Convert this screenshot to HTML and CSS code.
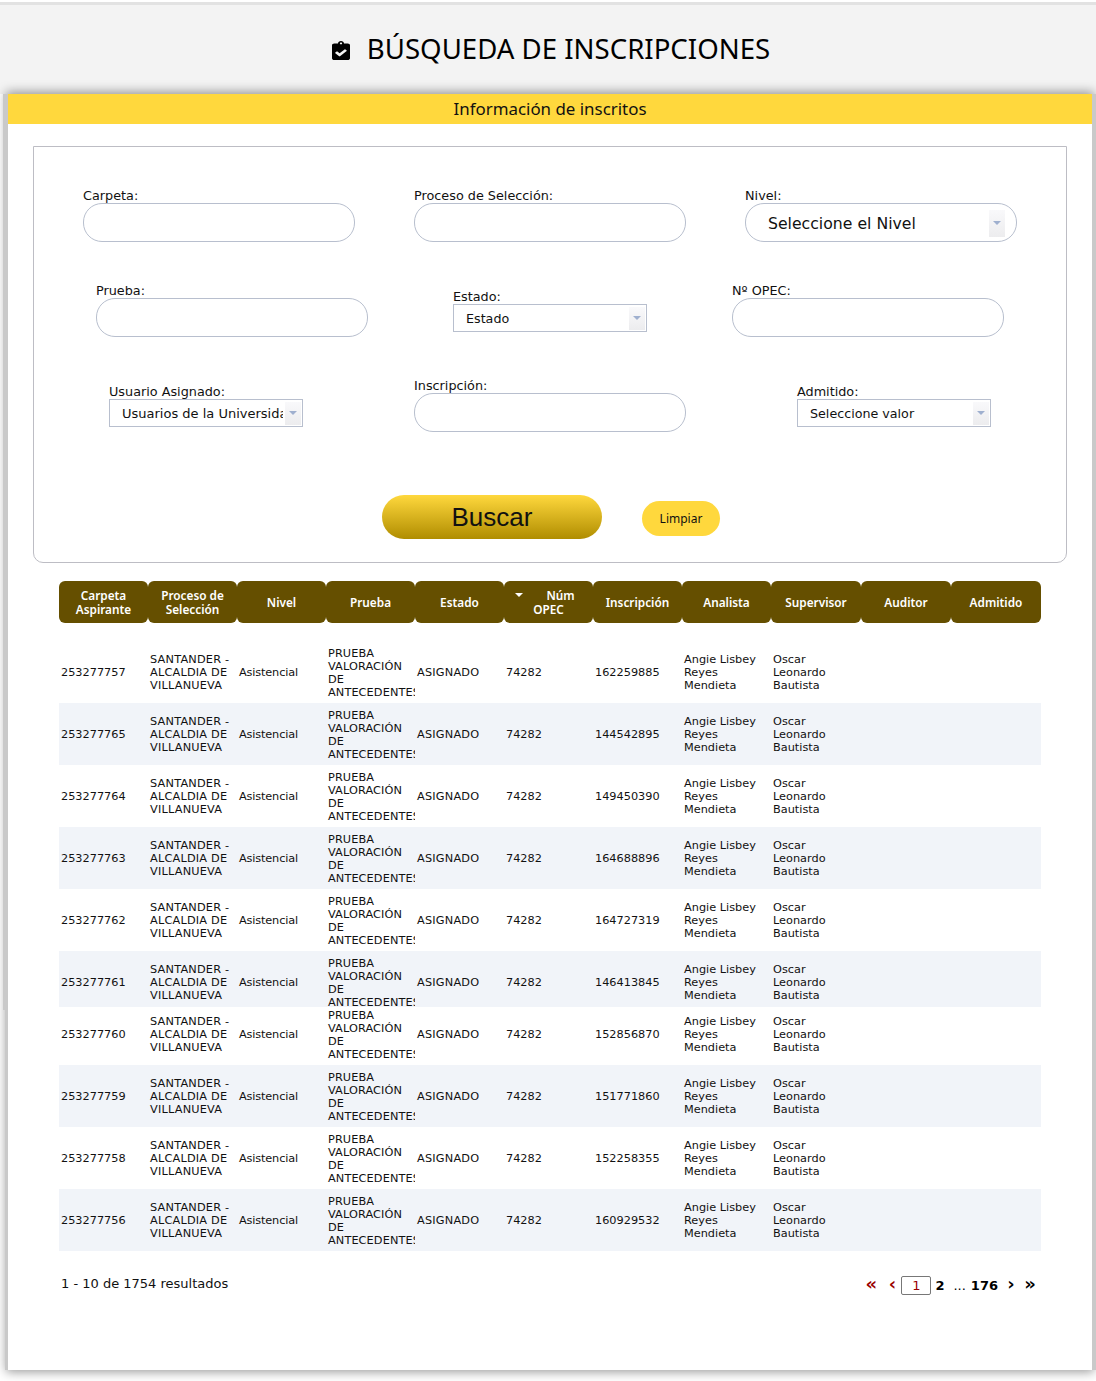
FILE: index.html
```html
<!DOCTYPE html>
<html lang="es">
<head>
<meta charset="utf-8">
<title>Búsqueda de inscripciones</title>
<link rel="stylesheet" href="styles.css">
</head>
<body>
<header class="top">
  <h1 class="title">
    <svg class="title-icon" viewBox="0 0 384 512" preserveAspectRatio="none"><path d="M336 64h-80c0-35.3-28.7-64-64-64s-64 28.7-64 64H48C21.5 64 0 85.5 0 112v352c0 26.5 21.5 48 48 48h288c26.5 0 48-21.5 48-48V112c0-26.5-21.5-48-48-48zM192 40c13.3 0 24 10.7 24 24s-10.7 24-24 24-24-10.7-24-24 10.7-24 24-24zm121.2 231.8l-143 141.8c-4.7 4.7-12.3 4.6-17-.1l-82.6-83.3c-4.7-4.7-4.6-12.3.1-17L99.1 285c4.7-4.7 12.3-4.6 17 .1l46 46.4 106-105.2c4.7-4.7 12.3-4.6 17 .1l28.2 28.4c4.7 4.8 4.6 12.3-.1 17z"/></svg>
    <span>BÚSQUEDA DE INSCRIPCIONES</span>
  </h1>
</header>
<main class="card">
  <div class="card-bar">Información de inscritos</div>
  <div class="card-body">
    <section class="filters">
      <div class="grid">
        <div class="field"><label class="lbl">Carpeta:</label><div class="input"></div></div>
        <div class="field"><label class="lbl">Proceso de Selección:</label><div class="input"></div></div>
        <div class="field"><label class="lbl">Nivel:</label>
          <div class="input round-select"><span class="rs-val">Seleccione el Nivel</span><span class="arrow"><i></i></span></div>
        </div>

        <div class="field in-13"><label class="lbl">Prueba:</label><div class="input"></div></div>
        <div class="field field-sel in-39"><label class="lbl">Estado:</label>
          <div class="select"><span class="sel-val">Estado</span><span class="arrow"><i></i></span></div>
        </div>
        <div class="field out-13"><label class="lbl">Nº OPEC:</label><div class="input"></div></div>

        <div class="field field-sel in-26"><label class="lbl">Usuario Asignado:</label>
          <div class="select"><span class="sel-val">Usuarios de la Universidad</span><span class="arrow"><i></i></span></div>
        </div>
        <div class="field"><label class="lbl">Inscripción:</label><div class="input"></div></div>
        <div class="field field-sel in-52"><label class="lbl">Admitido:</label>
          <div class="select"><span class="sel-val">Seleccione valor</span><span class="arrow"><i></i></span></div>
        </div>
      </div>
      <div class="actions">
        <button class="btn-search" type="button">Buscar</button>
        <button class="btn-clear" type="button">Limpiar</button>
      </div>
    </section>

    <section class="results">
      <div class="thead">
        <div class="th">Carpeta Aspirante</div>
        <div class="th">Proceso de Selección</div>
        <div class="th">Nivel</div>
        <div class="th">Prueba</div>
        <div class="th">Estado</div>
        <div class="th"><span><i class="sort"></i>Núm OPEC</span></div>
        <div class="th">Inscripción</div>
        <div class="th">Analista</div>
        <div class="th">Supervisor</div>
        <div class="th">Auditor</div>
        <div class="th">Admitido</div>
      </div>
      <div class="tbody" id="rows">
        <div class="row"><div class="cells"><div class="td">253277757</div><div class="td">SANTANDER - ALCALDIA DE VILLANUEVA</div><div class="td">Asistencial</div><div class="td">PRUEBA VALORACIÓN DE ANTECEDENTES</div><div class="td">ASIGNADO</div><div class="td">74282</div><div class="td">162259885</div><div class="td">Angie Lisbey Reyes Mendieta</div><div class="td">Oscar Leonardo Bautista</div><div class="td"></div><div class="td"></div></div></div>
        <div class="row alt"><div class="cells"><div class="td">253277765</div><div class="td">SANTANDER - ALCALDIA DE VILLANUEVA</div><div class="td">Asistencial</div><div class="td">PRUEBA VALORACIÓN DE ANTECEDENTES</div><div class="td">ASIGNADO</div><div class="td">74282</div><div class="td">144542895</div><div class="td">Angie Lisbey Reyes Mendieta</div><div class="td">Oscar Leonardo Bautista</div><div class="td"></div><div class="td"></div></div></div>
        <div class="row"><div class="cells"><div class="td">253277764</div><div class="td">SANTANDER - ALCALDIA DE VILLANUEVA</div><div class="td">Asistencial</div><div class="td">PRUEBA VALORACIÓN DE ANTECEDENTES</div><div class="td">ASIGNADO</div><div class="td">74282</div><div class="td">149450390</div><div class="td">Angie Lisbey Reyes Mendieta</div><div class="td">Oscar Leonardo Bautista</div><div class="td"></div><div class="td"></div></div></div>
        <div class="row alt"><div class="cells"><div class="td">253277763</div><div class="td">SANTANDER - ALCALDIA DE VILLANUEVA</div><div class="td">Asistencial</div><div class="td">PRUEBA VALORACIÓN DE ANTECEDENTES</div><div class="td">ASIGNADO</div><div class="td">74282</div><div class="td">164688896</div><div class="td">Angie Lisbey Reyes Mendieta</div><div class="td">Oscar Leonardo Bautista</div><div class="td"></div><div class="td"></div></div></div>
        <div class="row"><div class="cells"><div class="td">253277762</div><div class="td">SANTANDER - ALCALDIA DE VILLANUEVA</div><div class="td">Asistencial</div><div class="td">PRUEBA VALORACIÓN DE ANTECEDENTES</div><div class="td">ASIGNADO</div><div class="td">74282</div><div class="td">164727319</div><div class="td">Angie Lisbey Reyes Mendieta</div><div class="td">Oscar Leonardo Bautista</div><div class="td"></div><div class="td"></div></div></div>
        <div class="row alt row-short"><div class="cells"><div class="td">253277761</div><div class="td">SANTANDER - ALCALDIA DE VILLANUEVA</div><div class="td">Asistencial</div><div class="td">PRUEBA VALORACIÓN DE ANTECEDENTES</div><div class="td">ASIGNADO</div><div class="td">74282</div><div class="td">146413845</div><div class="td">Angie Lisbey Reyes Mendieta</div><div class="td">Oscar Leonardo Bautista</div><div class="td"></div><div class="td"></div></div></div>
        <div class="row row-lifted"><div class="cells"><div class="td">253277760</div><div class="td">SANTANDER - ALCALDIA DE VILLANUEVA</div><div class="td">Asistencial</div><div class="td">PRUEBA VALORACIÓN DE ANTECEDENTES</div><div class="td">ASIGNADO</div><div class="td">74282</div><div class="td">152856870</div><div class="td">Angie Lisbey Reyes Mendieta</div><div class="td">Oscar Leonardo Bautista</div><div class="td"></div><div class="td"></div></div></div>
        <div class="row alt"><div class="cells"><div class="td">253277759</div><div class="td">SANTANDER - ALCALDIA DE VILLANUEVA</div><div class="td">Asistencial</div><div class="td">PRUEBA VALORACIÓN DE ANTECEDENTES</div><div class="td">ASIGNADO</div><div class="td">74282</div><div class="td">151771860</div><div class="td">Angie Lisbey Reyes Mendieta</div><div class="td">Oscar Leonardo Bautista</div><div class="td"></div><div class="td"></div></div></div>
        <div class="row"><div class="cells"><div class="td">253277758</div><div class="td">SANTANDER - ALCALDIA DE VILLANUEVA</div><div class="td">Asistencial</div><div class="td">PRUEBA VALORACIÓN DE ANTECEDENTES</div><div class="td">ASIGNADO</div><div class="td">74282</div><div class="td">152258355</div><div class="td">Angie Lisbey Reyes Mendieta</div><div class="td">Oscar Leonardo Bautista</div><div class="td"></div><div class="td"></div></div></div>
        <div class="row alt"><div class="cells"><div class="td">253277756</div><div class="td">SANTANDER - ALCALDIA DE VILLANUEVA</div><div class="td">Asistencial</div><div class="td">PRUEBA VALORACIÓN DE ANTECEDENTES</div><div class="td">ASIGNADO</div><div class="td">74282</div><div class="td">160929532</div><div class="td">Angie Lisbey Reyes Mendieta</div><div class="td">Oscar Leonardo Bautista</div><div class="td"></div><div class="td"></div></div></div>
      </div>
      <div class="pager-row">
        <div class="count">1 - 10 de 1754 resultados</div>
        <nav class="pager">
          <span class="nav nav-red first">«</span>
          <span class="nav nav-red prev">‹</span>
          <span class="current">1</span>
          <span class="pg two">2</span>
          <span class="dots">...</span>
          <span class="pg">176</span>
          <span class="nav next">›</span>
          <span class="nav last">»</span>
        </nav>
      </div>
    </section>
  </div>
</main>
</body>
</html>
```
FILE: styles.css
```css
* { box-sizing: border-box; }
html, body { margin: 0; padding: 0; background: #fff; }
body { font-family: "DejaVu Sans", Verdana, sans-serif; color: #111; height: 1381px; overflow: hidden; padding-top: 2px; }

.top {
  height: 92px;
  background: #f3f3f3;
  border-top: 3px solid #e2e2e2;
  display: flex;
  align-items: center;
  justify-content: center;
  padding: 0 0 3px 6px;
}
.title {
  margin: 0;
  display: flex;
  align-items: center;
  gap: 17px;
  font-family: "Noto Sans", "Open Sans", sans-serif;
  font-weight: 400;
  font-size: 27.6px;
  line-height: 36px;
  color: #000;
}
.title-icon { width: 18px; height: 19px; fill: #000; margin-top: 5px; }

.card {
  margin: 0 4px 0 8px;
  height: 1276px;
  background: #fff;
  box-shadow: -3px 0 0 0 #c9c9c9, 4px 0 0 0 #c9c9c9, 0 0 10px 2px rgba(0,0,0,.4);
  position: relative;
}
.card::before {
  content: "";
  position: absolute;
  left: -5px;
  top: 0;
  width: 5px;
  height: 916px;
  background: #c9c9c9;
}
.card-bar {
  height: 30px;
  background: #ffd83d;
  text-align: center;
  font-family: "Noto Sans", "Open Sans", sans-serif;
  font-size: 16.9px;
  line-height: 30px;
  color: #111;
}
.card-body { padding: 22px 25px 0; }

.filters {
  height: 417px;
  border: 1px solid #bdbdc4;
  border-radius: 0 0 10px 10px;
  padding: 40px 0 0 49px;
}
.grid {
  display: grid;
  grid-template-columns: 331px 331px 272px;
  grid-auto-rows: 55px;
  row-gap: 40px;
}
.field { width: 272px; }
.field-sel { margin-top: 6px; width: 194px; }
.in-13 { margin-left: 13px; }
.in-26 { margin-left: 26px; }
.in-39 { margin-left: 39px; }
.in-52 { margin-left: 52px; }
.out-13 { margin-left: -13px; }
.lbl { display: block; height: 16px; font-size: 12.8px; line-height: 18px; color: #111; white-space: nowrap; }
.input {
  height: 39px;
  border: 1px solid #b8bfce;
  border-radius: 19px;
  background: #fff;
}
.round-select { display: flex; align-items: center; padding: 0 11px 0 22px; }
.rs-val { flex: 1; font-size: 15.7px; line-height: 39px; padding-top: 2px; white-space: nowrap; overflow: hidden; }
.round-select .arrow { height: 27px; margin-top: 1px; }
.select {
  height: 28px;
  border: 1px solid #b8bfce;
  display: flex;
  align-items: center;
  padding-right: 1px;
  background: #fff;
}
.sel-val { flex: 1; min-width: 0; margin: 0 1px 0 12px; padding-top: 2px; font-size: 12.7px; line-height: 26px; white-space: nowrap; overflow: hidden; }
.in-26 .sel-val { font-size: 13px; margin-right: 2px; }
.arrow {
  flex: none;
  width: 16px;
  height: 23px;
  background: linear-gradient(#f9f9fb, #ececee);
  display: flex;
  align-items: center;
  justify-content: center;
}
.arrow i {
  width: 0; height: 0;
  border-left: 4px solid transparent;
  border-right: 4px solid transparent;
  border-top: 4px solid #9fb0cf;
}

.actions { margin: 63px 0 0 299px; display: flex; align-items: flex-start; gap: 40px; }
.btn-search {
  width: 220px; height: 44px;
  border: 0; border-radius: 22px;
  background: linear-gradient(#ffd83d, #b08d00);
  font-family: "Liberation Sans", Arial, sans-serif;
  font-size: 26px;
  color: #111;
  padding: 0;
  margin: 0;
}
.btn-clear {
  width: 78px; height: 35px;
  margin-top: 6px;
  border: 0; border-radius: 18px;
  background: #ffd83d;
  font-family: "Noto Sans", sans-serif;
  font-size: 12px;
  color: #111;
  padding: 0;
}

.results { margin: 18px 0 0 26px; width: 982px; }
.thead, .cells {
  display: grid;
  grid-template-columns: repeat(8, 89px) repeat(3, 90px);
}
.thead { height: 42px; }
.th {
  background: #654f00;
  border-radius: 6px;
  color: #fff;
  font-family: "Noto Sans", sans-serif;
  font-weight: 600;
  font-size: 11.8px;
  line-height: 14px;
  display: flex;
  align-items: center;
  justify-content: center;
  text-align: center;
  padding: 0 12px;
}
.sort {
  display: inline-block;
  width: 0; height: 0;
  border-left: 4px solid transparent;
  border-right: 4px solid transparent;
  border-top: 4px solid #fff;
  margin: 0 23px 3px -7px;
  vertical-align: middle;
}
.tbody { margin-top: 18px; }
.row { height: 62px; }
.alt { background: #f1f4f9; }
.row-short { height: 56px; }
.row-lifted { height: 58px; display: flow-root; }
.row-lifted .cells { margin-top: -4px; }
.cells { height: 62px; align-items: center; font-size: 11.3px; line-height: 13px; color: #111; }
.td { padding-left: 2px; overflow: hidden; }
.td:nth-child(2), .td:nth-child(5) { letter-spacing: .2px; }
.td:nth-child(3) { letter-spacing: -.15px; }
.td:nth-child(4) { padding-top: 2px; letter-spacing: .1px; }

.pager-row { display: flex; justify-content: space-between; align-items: flex-start; padding: 24px 5px 0 2px; }
.count { margin-top: 1px; font-size: 13px; line-height: 16px; }
.pager { display: flex; align-items: center; font-size: 13px; font-weight: 700; color: #000; }
.nav { font-size: 18px; line-height: 18px; width: 12px; padding-bottom: 2px; text-align: center; font-weight: 700; }
.nav-red { color: #9a0000; }
.prev { margin-left: 11px; width: 8px; }
.current {
  width: 30px; height: 19px;
  border: 1px solid #777; border-radius: 2px;
  margin-left: 5px;
  text-align: center;
  font-weight: 400;
  font-size: 13px;
  line-height: 17px;
  color: #9a0000;
}
.two { margin-left: 4px; }
.dots { margin: 0 5px 0 9px; font-weight: 400; }
.next { margin-left: 9px; width: 8px; }
.last { margin-left: 9px; }
```
